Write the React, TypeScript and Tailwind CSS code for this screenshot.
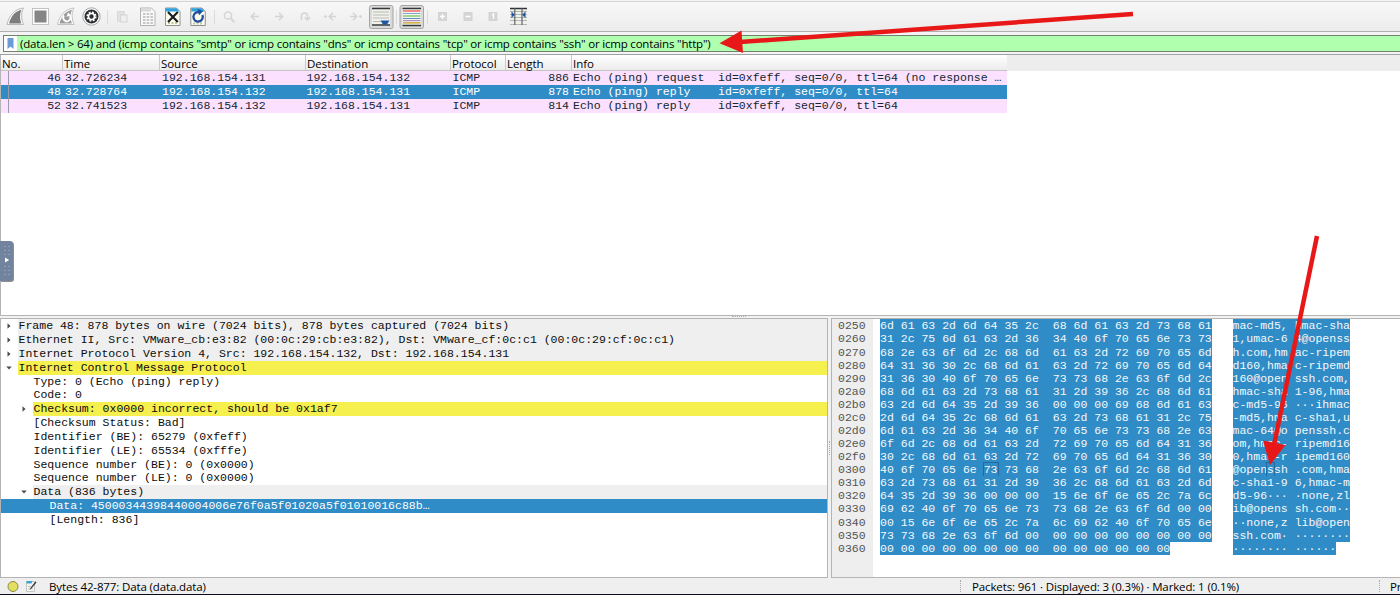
import React from "react";

const SANS = "font-['Open_Sans','Noto_Sans',sans-serif]";
const MONO = "font-['Liberation_Mono','DejaVu_Sans_Mono',monospace]";

const packets = [
  { no: "46", time: "32.726234", src: "192.168.154.131", dst: "192.168.154.132", len: "886", info: "Echo (ping) request  id=0xfeff, seq=0/0, ttl=64 (no response …", selected: false },
  { no: "48", time: "32.728764", src: "192.168.154.132", dst: "192.168.154.131", len: "878", info: "Echo (ping) reply    id=0xfeff, seq=0/0, ttl=64", selected: true },
  { no: "52", time: "32.741523", src: "192.168.154.132", dst: "192.168.154.131", len: "814", info: "Echo (ping) reply    id=0xfeff, seq=0/0, ttl=64", selected: false },
];

type TreeRow = { level: 0 | 1 | 2; arrow?: "right" | "down"; tone?: "gray" | "yellow" | "blue"; text: string };

const tree: TreeRow[] = [
  { level: 0, arrow: "right", tone: "gray", text: "Frame 48: 878 bytes on wire (7024 bits), 878 bytes captured (7024 bits)" },
  { level: 0, arrow: "right", tone: "gray", text: "Ethernet II, Src: VMware_cb:e3:82 (00:0c:29:cb:e3:82), Dst: VMware_cf:0c:c1 (00:0c:29:cf:0c:c1)" },
  { level: 0, arrow: "right", tone: "gray", text: "Internet Protocol Version 4, Src: 192.168.154.132, Dst: 192.168.154.131" },
  { level: 0, arrow: "down", tone: "yellow", text: "Internet Control Message Protocol" },
  { level: 1, text: "Type: 0 (Echo (ping) reply)" },
  { level: 1, text: "Code: 0" },
  { level: 1, arrow: "right", tone: "yellow", text: "Checksum: 0x0000 incorrect, should be 0x1af7" },
  { level: 1, text: "[Checksum Status: Bad]" },
  { level: 1, text: "Identifier (BE): 65279 (0xfeff)" },
  { level: 1, text: "Identifier (LE): 65534 (0xfffe)" },
  { level: 1, text: "Sequence number (BE): 0 (0x0000)" },
  { level: 1, text: "Sequence number (LE): 0 (0x0000)" },
  { level: 1, arrow: "down", tone: "gray", text: "Data (836 bytes)" },
  { level: 2, tone: "blue", text: "Data: 45000344398440004006e76f0a5f01020a5f01010016c88b…" },
  { level: 2, text: "[Length: 836]" },
];

const dump = [
  "6d61632d6d64352c686d61632d736861",
  "312c756d61632d3634406f70656e7373",
  "682e636f6d2c686d61632d726970656d",
  "643136302c686d61632d726970656d64",
  "313630406f70656e7373682e636f6d2c",
  "686d61632d736861312d39362c686d61",
  "632d6d64352d393600000069686d6163",
  "2d6d64352c686d61632d736861312c75",
  "6d61632d3634406f70656e7373682e63",
  "6f6d2c686d61632d726970656d643136",
  "302c686d61632d726970656d64313630",
  "406f70656e7373682e636f6d2c686d61",
  "632d736861312d39362c686d61632d6d",
  "64352d3936000000156e6f6e652c7a6c",
  "6962406f70656e7373682e636f6d0000",
  "00156e6f6e652c7a6c6962406f70656e",
  "7373682e636f6d000000000000000000",
  "0000000000000000000000000000",
].map((s) => s.match(/../g) as string[]);

const MARK_ROW = 11;
const MARK_BYTE = 5;

const printable = (b: string) => {
  const n = parseInt(b, 16);
  return n >= 32 && n < 127 ? String.fromCharCode(n) : "·";
};

function marked(text: string, at: number, size: number) {
  return (
    <>
      {text.slice(0, at)}
      <span className="outline-1 outline-[#1f6ba3]">{text.slice(at, at + size)}</span>
      {text.slice(at + size)}
    </>
  );
}

function Toolbar() {
  return (
    <div className="flex h-[31px] shrink-0 items-start border-t border-b border-t-[#d4d4d4] border-b-[#b0b0b0] bg-linear-to-b from-[#f8f8f8] to-[#ececec]">
      <svg width="530" height="29" viewBox="0 2 530 29" className="block shrink-0">
        {/* start capture */}
        <path d="M7 24.5C9 16 14 9 23.5 8C21 12 21 19 23.5 24.5Z" fill="#fff" stroke="#b9b9b9" strokeWidth="1" />
        <path d="M9 23.5C11 16 15 11 21.5 9.7C19.5 13.500 19.700 19 21.300 23.500Z" fill="#7d7d7d" />
        {/* stop */}
        <rect x="32.500" y="8.500" width="16" height="16" fill="#fff" stroke="#c2c2c2" />
        <rect x="34.500" y="10.500" width="12" height="12" fill="#858585" />
        {/* restart */}
        <path d="M57.500 24.500C59.500 16 64.500 9 74 8C71.500 12 71.500 19 74 24.500Z" fill="#fff" stroke="#c2c2c2" />
        <path d="M59.500 23.500C61.500 16 65.500 11 72 9.700C70 13.500 70.200 19 71.800 23.500Z" fill="#9c9c9c" />
        <path d="M64 15.500a3.600 3.600 0 1 0 6 .5" fill="none" stroke="#fff" strokeWidth="1.800" />
        <path d="M66.500 16.800l1.500-4.300 3.500 3z" fill="#fff" />
        {/* options */}
        <circle cx="91.500" cy="16.500" r="8.700" fill="#fff" stroke="#a6a6a6" />
        <circle cx="91.500" cy="16.500" r="7" fill="#2c2f31" />
        <circle cx="91.500" cy="16.500" r="4.100" fill="none" stroke="#fff" strokeWidth="2" strokeDasharray="1.800 1.420" />
        <circle cx="91.500" cy="16.500" r="3" fill="none" stroke="#fff" strokeWidth="1.600" />
        <circle cx="91.500" cy="16.500" r="1.500" fill="#2c2f31" />
        <path d="M107.500 10v14M214.500 10v14M396.500 10v14M427.500 10v14" stroke="#dadada" />
        {/* open */}
        <path d="M117.500 11.500h7v3h-4v7h-3z" fill="#e2e2e2" stroke="#d8d8d8" />
        <rect x="120.500" y="15" width="6.500" height="7" fill="#eee" stroke="#d4d4d4" />
        {/* save */}
        <path d="M140.500 8h11l3.500 3.500v14h-14.500z" fill="#fafafa" stroke="#b3b3b3" />
        <path d="M141 8.500h10v3h-10z" fill="#d9d9d9" />
        <path d="M143 14h10M143 17h10M143 20h10M143 23h10" stroke="#c6c6c6" strokeWidth="1.800" strokeDasharray="2.500 1.200" />
        {/* close */}
        <path d="M165.500 8h11l3.500 3.500v14h-14.500z" fill="#fbfbee" stroke="#8f938f" />
        <path d="M166 8.300h10.500l3 3.200h-13.500z" fill="#2ea3df" />
        <path d="M168 23h10" stroke="#b9c6a0" strokeWidth="2" strokeDasharray="2 1.500" />
        <path d="M168 12l9.800 10M177.800 12l-9.800 10" stroke="#171b1e" strokeWidth="2.100" />
        {/* reload */}
        <path d="M190.800 8h11l3.500 3.500v14h-14.500z" fill="#fbfbee" stroke="#8f938f" />
        <path d="M191.300 8.300h10.500l3 3.200h-13.500z" fill="#2ea3df" />
        <path d="M193 23.500h10" stroke="#c0c8a8" strokeWidth="1.800" strokeDasharray="2 1.500" />
        <path d="M202.400 15a4.700 4.700 0 1 1-3.300-2.700" fill="none" stroke="#1f4e9c" strokeWidth="2.300" />
        <path d="M197.500 9l5.500 2.300-4 4z" fill="#1f4e9c" />
        {/* find and navigation */}
        <g fill="none" stroke="#d4d4d4" strokeWidth="1.500">
          <circle cx="228" cy="15.500" r="3.600" />
          <path d="M230.800 18.300l3.700 4" strokeWidth="1.800" />
          <path d="M259 16.500h-7.500M255 12.800l-3.700 3.700 3.700 3.700" />
          <path d="M275 16.500h7.500M279 12.800l3.700 3.700-3.700 3.700" />
          <path d="M301.500 20v-4a3 3 0 0 1 6 0v3.500M304.800 17.300l2.700 2.700 2.500-2.700" />
          <path d="M336 16.500h-6M333 12.800l-3.700 3.700 3.700 3.700" />
          <path d="M350 16.500h6.500M353 12.800l3.700 3.700-3.700 3.700" />
        </g>
        <circle cx="325.500" cy="16.500" r="1.200" fill="#cfcfcf" />
        <circle cx="360.500" cy="16.500" r="1.200" fill="#cfcfcf" />
        {/* autoscroll */}
        <rect x="369.500" y="5.500" width="23.500" height="23" rx="2" fill="#d9d9d9" stroke="#a5a5a5" />
        <rect x="372" y="8" width="18" height="18" fill="#f1f1ec" />
        <path d="M372 8.500h18M372 25h18" stroke="#33383a" strokeWidth="1.400" />
        <path d="M373 12h16M373 15h16M373 18h16M373 21.500h8" stroke="#b7bab4" />
        <path d="M380.500 20.500h9l-2.500 4h-4z" fill="#1f55a5" />
        {/* colorize */}
        <rect x="400" y="5.500" width="23.500" height="23" rx="2" fill="#d9d9d9" stroke="#a5a5a5" />
        <rect x="402.500" y="8" width="18.500" height="18" fill="#f5f5f0" />
        <path d="M402.500 8.500h18.500M402.500 25.500h18.500" stroke="#33383a" strokeWidth="1.400" />
        <path d="M403 11h17.500" stroke="#ef4a4a" strokeWidth="1.200" />
        <path d="M403 13.500h17.500" stroke="#7ea5d8" strokeWidth="1" />
        <path d="M403 16h17.500" stroke="#62bb3b" strokeWidth="1.100" />
        <path d="M403 18.500h17.500" stroke="#5d8cc9" strokeWidth="1" />
        <path d="M403 20.700h17.500" stroke="#9d78aa" strokeWidth="1" />
        <path d="M403 22.900h17.500" stroke="#c39a10" strokeWidth="1.200" />
        {/* zoom */}
        <path d="M438 12h9v9h-9zM463.500 12h9v9h-9zM488.500 12h9v9h-9z" fill="#d4d4d4" />
        <path d="M440 16.500h5M442.500 14v5M465.500 16.500h5M492 14.800l1.500-.8v5" fill="none" stroke="#fff" strokeWidth="1.400" />
        {/* resize columns */}
        <rect x="510" y="8" width="17" height="17" fill="#f0f0ea" />
        <path d="M510 8.500h17" stroke="#2e3436" strokeWidth="1.500" />
        <path d="M510 11.500h17M510 14.500h17M510 17.500h17M510 20.500h17M510 24.500h17" stroke="#b4b8b4" />
        <path d="M514.800 8v17M522 8v17" stroke="#555a5c" strokeWidth="1.100" />
        <path d="M511.500 11.500l3.300 3.200-3.300 3.200zM525.500 11.500l-3.300 3.200 3.300 3.200z" fill="#1f55a5" />
      </svg>
    </div>
  );
}

function FilterBar() {
  return (
    <div className="flex h-[23px] shrink-0 items-start border-b border-[#a0a0a0] bg-[#f4f4f4] pt-[3px] pl-[3px]">
      <div className="flex h-[17px] flex-1 items-center border border-r-0 border-[#72806f] bg-[#afffaf]">
        <span className="flex h-full w-[13px] shrink-0 items-center justify-center bg-white">
          <svg width="7" height="11" viewBox="0 0 7 11"><path d="M.5 0h6v11l-3-2.500-3 2.500z" fill="#6b9bd8" /></svg>
        </span>
        <span className={`${SANS} pb-[1px] pl-[3px] text-[11.5px] leading-[15px] tracking-[-0.192px] whitespace-pre text-black`}>
          (data.len &gt; 64) and (icmp contains "smtp" or icmp contains "dns" or icmp contains "tcp" or icmp contains "ssh" or icmp contains "http")
        </span>
      </div>
    </div>
  );
}

const COLS = "grid grid-cols-[62px_97px_146px_145px_55px_66px_436px]";

function PacketList() {
  return (
    <div className="h-[261px] shrink-0 border-b border-l border-[#b4b4b4] bg-white">
      <div className="bg-[#ededed]">
        <div className={`${COLS} ${SANS} h-[16px] w-[1006px] border-b border-[#c4c4c4] bg-linear-to-b from-white to-[#ececec] text-[11.5px] leading-[17px] text-black`}>
          {["No.", "Time", "Source", "Destination", "Protocol", "Length", "Info"].map((h, i) => (
            <span key={h} className={`h-[15px] pl-[1px] tracking-[-0.05px] whitespace-nowrap ${i < 6 ? "border-r border-[#c8c8c8]" : ""}`}>{h}</span>
          ))}
        </div>
      </div>
      {packets.map((p) => (
        <div
          key={p.no}
          className={`${COLS} ${MONO} h-[14px] w-[1006px] overflow-hidden text-[11.525px] leading-[14px] whitespace-pre ${p.selected ? "bg-[#308cc6] text-white" : "bg-[#fce0ff] text-[#12272e]"}`}
        >
          <span className="ml-[7px] border-l border-[#9a9aa8] pr-[2px] text-right">{p.no}</span>
          <span className="pl-[2px]">{p.time}</span>
          <span className="pl-[2px]">{p.src}</span>
          <span className="pl-[0.5px]">{p.dst}</span>
          <span className="pl-[1.5px]">ICMP</span>
          <span className="pr-[3px] text-right">{p.len}</span>
          <span className="pl-[1px]">{p.info}</span>
        </div>
      ))}
    </div>
  );
}

const indent = { 0: "w-[16.5px]", 1: "w-[31.500px]", 2: "w-[47.500px]" };
const tones = { gray: "bg-[#efefef]", yellow: "bg-[#f6f04f]", blue: "bg-[#308cc6] text-white" };

function Details() {
  return (
    <div className={`${MONO} w-[828px] shrink-0 border border-[#b4b4b4] bg-white pt-[0.4px] text-[11.525px] leading-[13.820px] text-[#0c0c0c]`}>
      {tree.map((r) => (
        <div key={r.text} className={`flex h-[13.820px] ${r.tone === "blue" ? tones.blue : ""}`}>
          <span className={`${indent[r.level]} flex shrink-0 items-center justify-end pr-[6px]`}>
            {r.arrow && (
              <svg width="6" height="6" viewBox="0 0 6 6">
                <path d={r.arrow === "right" ? "M1.500 .3L4.500 3l-3 2.700z" : "M.3 1.500h5.400L3 4.500z"} fill="#4a4a4a" />
              </svg>
            )}
          </span>
          <span className={`flex-1 pl-[1px] whitespace-pre ${r.tone ? tones[r.tone] : ""}`}>{r.text}</span>
        </div>
      ))}
    </div>
  );
}

function HexView() {
  return (
    <div className={`${MONO} flex flex-1 border border-r-0 border-[#b4b4b4] bg-white text-[11.520px] leading-[13.100px] whitespace-pre`}>
      <div className="w-[41px] shrink-0 bg-[#eeeeee] pt-[0.4px] pl-[6px] text-[#555]">
        {dump.map((_, i) => (
          <div key={i} className="h-[13.080px]">{(0x250 + i * 16).toString(16).padStart(4, "0")}</div>
        ))}
      </div>
      <div className="ml-[7px] flex w-[352.500px] shrink-0 flex-col items-start pt-[0.4px] text-[#f4f8fb]">
        {dump.map((row, i) => {
          const text = row.slice(0, 8).join(" ") + "  " + row.slice(8).join(" ");
          return (
            <div key={i} className="h-[13.080px] bg-[#308cc6]">
              {i === MARK_ROW ? marked(text, MARK_BYTE * 3, 2) : text}
            </div>
          );
        })}
      </div>
      <div className="flex flex-col items-start pt-[0.4px] text-[#f4f8fb]">
        {dump.map((row, i) => {
          const chars = row.map(printable);
          const text = chars.slice(0, 8).join("") + " " + chars.slice(8).join("");
          return (
            <div key={i} className="h-[13.080px] bg-[#308cc6]">
              {i === MARK_ROW ? marked(text, MARK_BYTE, 1) : text}
            </div>
          );
        })}
      </div>
    </div>
  );
}

function StatusBar() {
  return (
    <div className={`${SANS} flex h-[17px] shrink-0 items-center overflow-hidden border-b border-[#0d0d20] bg-[#efefef] text-[11.5px] leading-[16px] tracking-[-0.13px] whitespace-nowrap text-black`}>
      <svg width="40" height="16" viewBox="0 0 40 16" className="shrink-0">
        <circle cx="13" cy="8.500" r="5" fill="#e3df62" stroke="#8d8a3c" />
        <path d="M26.500 3.500h8v10h-8z" fill="#f6f6f0" stroke="#c4c6c2" />
        <path d="M26.500 3h6l-1 2.500h-5z" fill="#3fa4dc" />
        <path d="M28 8.500h3M28 11h5" stroke="#c2c5bf" />
        <path d="M35.500 3.300l-5 6.500-1 2 2-1.200 5-6z" fill="#3a3f42" />
      </svg>
      <span className="w-[920px] shrink-0 pt-[2px] pl-[9px]">Bytes 42-877: Data (data.data)</span>
      <span className="h-[12px] w-px shrink-0 border-l border-dotted border-[#aaa]" />
      <span className="w-[418px] shrink-0 pt-[2px] pl-[11px]">Packets: 961 · Displayed: 3 (0.3%) · Marked: 1 (0.1%)</span>
      <span className="h-[12px] w-px shrink-0 border-l border-dotted border-[#aaa]" />
      <span className="shrink-0 pt-[2px] pl-[10px]">Pr</span>
    </div>
  );
}

export default function App() {
  return (
    <div className="relative flex h-[595px] w-[1400px] flex-col overflow-hidden bg-[#f2f2f2]">
      <div className="h-px shrink-0 bg-[#f4f4f4]" />
      <Toolbar />
      <FilterBar />
      <PacketList />
      <div className="flex h-[2px] shrink-0 pl-[732px]">
        <span className="h-px w-[14px] border-t border-dotted border-[#b0b0b0]" />
      </div>
      <div className="flex h-[260px] shrink-0">
        <Details />
        <div className="flex w-[3px] shrink-0 items-center justify-center">
          <span className="h-[14px] w-px border-l border-dotted border-[#b0b0b0]" />
        </div>
        <HexView />
      </div>
      <StatusBar />

      <div className="absolute top-[241px] left-0 flex h-[40px] w-[13px] items-center justify-center rounded-r-[3px] bg-[#71839d] shadow-[1px_1px_0_#8f8f8f]">
        <svg width="12" height="38" viewBox="0 0 12 38">
          <path d="M4 4v9M8 4v9M4 24v10M8 24v10" stroke="#a9b8cc" strokeDasharray="1 3" />
          <path d="M4 15.500l4.200 2.500-4.200 2.500z" fill="#fff" />
        </svg>
      </div>

      <svg width="1400" height="595" viewBox="0 0 1400 595" className="pointer-events-none absolute inset-0">
        <path d="M1133 14L740 42" stroke="#e81818" strokeWidth="4.500" />
        <path d="M719.500 43.300L741.500 30.500L743 53z" fill="#e81818" />
        <path d="M1317 236L1274 445" stroke="#e81818" strokeWidth="4.500" />
        <path d="M1270 465L1263 440.500L1285.500 445z" fill="#e81818" />
      </svg>
    </div>
  );
}
